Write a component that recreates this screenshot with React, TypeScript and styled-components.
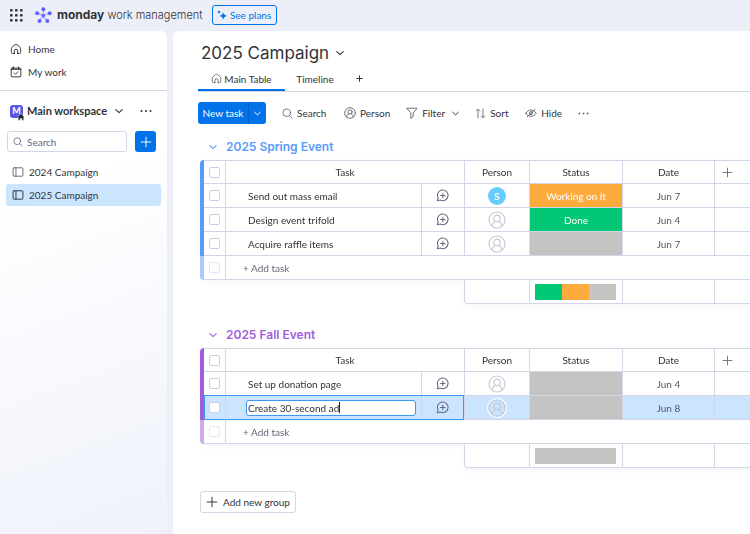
import React from "react";
import styled, { createGlobalStyle, css } from "styled-components";

const text = "#323338";
const muted = "#676879";
const line = "#d3d6e6";
const primary = "#0073ea";
const focus = "#3d97f5";
const selectedBg = "#cce5ff";
const heading = 'Inter, "Liberation Sans", sans-serif';

const GlobalStyle = createGlobalStyle`
  * { box-sizing: border-box; }
  body {
    margin: 0;
    background: #eceff8;
    color: ${text};
    font-family: Lato, "Liberation Sans", sans-serif;
    font-size: 10px;
    line-height: 14px;
  }
  button, input { font: inherit; color: inherit; margin: 0; }
  button { background: none; border: 0; padding: 0; cursor: pointer; }
  h1, h2 { margin: 0; }
  svg { display: block; flex: none; }
`;

/* ---------- icons ---------- */

const Stroke = styled.svg.attrs({
  viewBox: "0 0 20 20",
  "aria-hidden": true,
})<{ $size?: number; $weight?: number }>`
  width: ${(p) => p.$size ?? 12}px;
  height: ${(p) => p.$size ?? 12}px;
  fill: none;
  stroke: currentColor;
  stroke-width: ${(p) => p.$weight ?? 1.6};
  stroke-linecap: round;
  stroke-linejoin: round;
`;

type IconProps = { size?: number; weight?: number };

const HomeIcon = ({ size }: IconProps) => (
  <Stroke $size={size}>
    <path d="M7.2 17.5H4.3a2 2 0 0 1-2-2V8.800c0-.6.3-1.100.7-1.500l5.700-4.700a2 2 0 0 1 2.600 0L17 7.300c.4.4.7.9.7 1.500v6.700a2 2 0 0 1-2 2h-2.900" />
    <path d="M7.200 17.500v-4.300a2.800 2.800 0 0 1 5.600 0v4.300" />
  </Stroke>
);

const CalendarIcon = ({ size }: IconProps) => (
  <Stroke $size={size}>
    <rect x="2" y="3.500" width="16" height="14.500" rx="1.500" />
    <path d="M5.800 1.500v4M14.200 1.500v4M2 5.500h16M6.800 11.500l2.300 2.300 4.300-4.300" />
  </Stroke>
);

const SearchIcon = ({ size }: IconProps) => (
  <Stroke $size={size}>
    <circle cx="8.500" cy="8.500" r="6.800" />
    <path d="M13.500 13.500L18.500 18.500" />
  </Stroke>
);

const PlusIcon = ({ size, weight }: IconProps) => (
  <Stroke $size={size} $weight={weight}>
    <path d="M10 2v16M2 10h16" />
  </Stroke>
);

const ChevronIcon = ({ size = 8 }: IconProps) => (
  <Stroke $size={size} $weight={2.8}>
    <path d="M2 6.500l8 7.500 8-7.500" />
  </Stroke>
);

const BoardIcon = ({ size }: IconProps) => (
  <Stroke $size={size}>
    <rect x="1.800" y="3" width="16.400" height="14" rx="1.500" />
    <path d="M6.600 3v14" />
  </Stroke>
);

const PersonIcon = ({ size, weight }: IconProps) => (
  <Stroke $size={size} $weight={weight}>
    <circle cx="10" cy="10" r="8.900" />
    <circle cx="10" cy="8.200" r="3.600" />
    <path d="M4.300 16.500c.7-2.800 2-4.300 3.800-5.200M15.700 16.500c-.7-2.800-2-4.300-3.800-5.200" />
  </Stroke>
);

const FilterIcon = ({ size }: IconProps) => (
  <Stroke $size={size}>
    <path d="M1.500 2h17l-6.500 8v6l-4 2.600V10z" />
  </Stroke>
);

const SortIcon = ({ size }: IconProps) => (
  <Stroke $size={size}>
    <path d="M5.500 18V2.500M2.300 5.500l3.200-3.200 3.200 3.200M14.500 2v15.500M11.300 14.500l3.200 3.200 3.200-3.200" />
  </Stroke>
);

const HideIcon = ({ size }: IconProps) => (
  <Stroke $size={size}>
    <path d="M1.500 10.500C3.500 6.800 6.400 5 10 5s6.500 1.800 8.500 5.500C16.500 13.700 13.600 15.500 10 15.500s-6.500-1.800-8.500-5z" />
    <circle cx="10" cy="10.200" r="2.600" />
    <path d="M16.500 4L3.500 16.500" />
  </Stroke>
);

const DotsIcon = ({ size }: IconProps) => (
  <Stroke $size={size}>
    <g fill="currentColor" stroke="none">
      <circle cx="2.500" cy="10" r="1.700" />
      <circle cx="10" cy="10" r="1.700" />
      <circle cx="17.500" cy="10" r="1.700" />
    </g>
  </Stroke>
);

const ChatIcon = ({ size }: IconProps) => (
  <Stroke $size={size}>
    <path d="M2 18.200l1.300-4.400a8.200 8.200 0 1 1 3.600 3.300z" />
    <path d="M10.500 6.500v6.800M7.100 9.900h6.800" />
  </Stroke>
);

const GridIcon = () => (
  <svg width="13" height="13" viewBox="0 0 13 13" fill={text} aria-hidden="true">
    {[0, 5, 10].flatMap((y) =>
      [0, 5, 10].map((x) => <rect key={`${x}-${y}`} x={x} y={y} width="2.600" height="2.600" rx="0.700" />)
    )}
  </svg>
);

const LogoIcon = () => (
  <svg width="17" height="17" viewBox="0 0 51 51" aria-hidden="true">
    <g stroke="#b4b5f8" strokeWidth="5" strokeLinecap="round">
      <path d="M25 26V7M25 26L7 19M25 26l18-7M25 26L14 42M25 26l11 16" />
    </g>
    <g fill="#6161ff">
      <circle cx="25" cy="6.500" r="6" />
      <circle cx="6.500" cy="19" r="6" />
      <circle cx="44" cy="19" r="6" />
      <circle cx="13.500" cy="42" r="6" />
      <circle cx="37" cy="42" r="6" />
      <circle cx="25" cy="25.500" r="5" />
    </g>
  </svg>
);

const SparkleIcon = () => (
  <svg width="10" height="10" viewBox="0 0 20 20" fill={primary} aria-hidden="true">
    <path d="M12.500 4.500c.9 3.800 2.700 6 7.500 7.300-4.800 1.300-6.600 3.500-7.500 7.400-.9-3.900-2.700-6.100-7.500-7.400 4.800-1.300 6.600-3.500 7.500-7.300z" />
    <path d="M4 0c.6 2.400 1.600 3.400 4 4-2.400.6-3.400 1.600-4 4-.6-2.400-1.600-3.400-4-4 2.400-.6 3.400-1.600 4-4z" />
  </svg>
);

/* ---------- page shell ---------- */

const Page = styled.div`
  min-height: 100vh;
  display: grid;
  grid-template: 31px 1fr / 167px minmax(0, 1fr);
  column-gap: 6px;
`;

const TopBar = styled.header`
  grid-column: 1 / -1;
  display: flex;
  align-items: center;
  padding: 0 10px 1px;
`;

const Brand = styled.div`
  display: flex;
  align-items: center;
  gap: 5px;
  margin: 0 9px 0 12px;
  font-family: ${heading};
  font-size: 11px;
  font-weight: 300;
  white-space: nowrap;
`;

const BrandName = styled.strong`
  font-size: 12px;
  font-weight: 700;
`;

const PlansButton = styled.button`
  display: flex;
  align-items: center;
  justify-content: center;
  gap: 3px;
  width: 65px;
  height: 20px;
  border: 1px solid ${primary};
  border-radius: 3px;
  color: ${primary};
`;

const Sidebar = styled.aside`
  background: linear-gradient(160deg, #ffffff 30%, #eff2fb 100%);
  border-top-right-radius: 6px;
`;

const NavList = styled.nav`
  display: flex;
  flex-direction: column;
  gap: 9px;
  padding: 11px 10px;
  border-bottom: 1px solid ${line};
`;

const NavLink = styled.a`
  display: flex;
  align-items: center;
  gap: 6px;
  color: inherit;
  text-decoration: none;
`;

const WorkspaceRow = styled.div`
  display: flex;
  align-items: center;
  padding: 13px 15px 13px 10px;
  font-size: 11px;
  font-weight: 700;
`;

const WorkspaceBadge = styled.span`
  position: relative;
  width: 13px;
  height: 13px;
  margin-right: 4px;
  border-radius: 3px;
  background: #5559df;
  color: #fff;
  font-size: 9px;
  line-height: 12px;
  text-align: center;
`;

const BadgeHome = styled.svg`
  position: absolute;
  right: -2px;
  bottom: -3px;
  width: 8px;
  height: 8px;
`;

const WorkspaceToggle = styled.button`
  margin: 0 auto 0 8px;
`;

const SearchRow = styled.div`
  display: flex;
  gap: 8px;
  padding: 0 11px 0 7px;
`;

const SearchBox = styled.label`
  flex: 1;
  min-width: 0;
  display: flex;
  align-items: center;
  gap: 4px;
  height: 21px;
  padding: 0 5px;
  border: 1px solid ${line};
  border-radius: 3px;
  background: #fff;
  color: ${muted};
`;

const SearchField = styled.input`
  flex: 1;
  min-width: 0;
  padding: 0;
  border: 0;
  outline: 0;
  background: none;
  &::placeholder { color: ${muted}; opacity: 1; }
`;

const AddButton = styled.button`
  display: grid;
  place-items: center;
  width: 21px;
  height: 21px;
  border-radius: 3px;
  background: ${primary};
  color: #fff;
`;

const BoardList = styled.nav`
  display: grid;
  gap: 1px;
  padding: 9px 6px;
`;

const BoardLink = styled.a<{ $active?: boolean }>`
  display: flex;
  align-items: center;
  gap: 5px;
  height: 22px;
  padding-left: 6px;
  border-radius: 3px;
  background: ${(p) => (p.$active ? selectedBg : "transparent")};
  color: ${text};
  text-decoration: none;
  svg { color: ${(p) => (p.$active ? text : muted)}; }
`;

const Main = styled.main`
  background: #fff;
  border-top-left-radius: 6px;
  padding: 12px 0 21px 25px;
  overflow-x: auto;
`;

const TitleRow = styled.div`
  display: flex;
  align-items: center;
  gap: 7px;
  padding-left: 3px;
`;

const Title = styled.h1`
  font-family: ${heading};
  font-size: 17px;
  font-weight: 400;
  line-height: 20px;
`;

const Tabs = styled.div`
  display: flex;
  height: 24px;
  margin-top: 5px;
  border-bottom: 1px solid ${line};
`;

const Tab = styled.button<{ $active?: boolean }>`
  display: flex;
  align-items: center;
  justify-content: center;
  gap: 2px;
  width: ${(p) => (p.$active ? 87 : 60)}px;
  border-bottom: 2px solid ${(p) => (p.$active ? primary : "transparent")};
  svg { color: ${muted}; }
`;

const AddTab = styled(Tab)`
  width: 28px;
  svg { color: ${text}; }
`;

const Toolbar = styled.div`
  display: flex;
  align-items: center;
  gap: 16px;
  margin-top: 10px;
`;

const NewTask = styled.div`
  display: flex;
  height: 22px;
  border-radius: 3px;
  overflow: hidden;
  background: ${primary};
  color: #fff;
`;

const NewTaskButton = styled.button`
  width: 50px;
`;

const NewTaskMenu = styled.button`
  display: grid;
  place-items: center;
  width: 18px;
  border-left: 1px solid #0060c2;
`;

const Tool = styled.button<{ $width: number }>`
  display: flex;
  align-items: center;
  gap: 4px;
  min-width: ${(p) => p.$width}px;
  svg { color: ${muted}; }
`;

const ToolMenu = styled.span`
  margin-left: auto;
  svg { color: ${text}; }
`;

/* ---------- groups ---------- */

const Groups = styled.div`
  margin-top: 14px;
`;

const Group = styled.section`
  margin: 0 0 22px 2px;
`;

const GroupTitle = styled.h2<{ $color: string }>`
  display: flex;
  align-items: center;
  gap: 9px;
  margin-bottom: 4px;
  padding-left: 9px;
  color: ${(p) => p.$color};
  font-family: ${heading};
  font-size: 12px;
  font-weight: 600;
  line-height: 18px;
`;

const Table = styled.table`
  width: 100%;
  min-width: 540px;
  table-layout: fixed;
  border-collapse: separate;
  border-spacing: 0;
  filter: drop-shadow(0 2px 2px rgba(60, 70, 110, 0.05));
`;

const Col = styled.col<{ $width?: number }>`
  width: ${(p) => (p.$width ? `${p.$width}px` : "auto")};
`;

const cell = css`
  height: 24px;
  padding: 0;
  border-bottom: 1px solid ${line};
  border-left: 1px solid ${line};
  background: #fff;
  font-weight: 400;
  line-height: 14px;
  text-align: center;
`;

const HeadCell = styled.th`
  ${cell}
  border-top: 1px solid ${line};
`;

const HeadCheck = styled(HeadCell)`
  border-left: 0;
`;

const AddColumnCell = styled(HeadCell)`
  padding-left: 7px;
`;

const Edge = styled.td<{ $color: string; $place?: "top" | "bottom" }>`
  padding: 0;
  background: ${(p) => p.$color};
  opacity: ${(p) => (p.$place === "bottom" ? 0.5 : 1)};
  border-radius: ${(p) => (p.$place === "top" ? "4px 0 0 0" : p.$place === "bottom" ? "0 0 0 4px" : "0")};
`;

const Cell = styled.td<{ $selected?: boolean }>`
  ${cell}
  ${(p) => p.$selected && css`background: ${selectedBg};`}
`;

const outlined = css<{ $selected?: boolean }>`
  ${(p) =>
    p.$selected &&
    css`
      border-bottom-color: ${focus};
      box-shadow: 0 -1px 0 ${focus};
    `}
`;

const CheckCell = styled(Cell)`
  border-left: 0;
  ${outlined}
  ${(p) => p.$selected && css`box-shadow: 0 -1px 0 ${focus}, inset 1px 0 0 ${focus};`}
`;

const Check = styled.input.attrs({ type: "checkbox" })`
  appearance: none;
  display: block;
  width: 11px;
  height: 11px;
  margin: 0 auto;
  border: 1px solid #cdd0df;
  border-radius: 2px;
  background: #fff;
  &:disabled { opacity: 0.5; }
`;

const NameCell = styled(Cell)`
  padding-left: 22px;
  text-align: left;
`;

const EditCell = styled(Cell)`
  padding: 0 5px 0 20px;
  ${outlined}
`;

const EditBox = styled.div`
  display: flex;
  align-items: center;
  height: 16px;
  padding: 0 1px;
  border: 1px solid ${focus};
  border-radius: 3px;
  background: #fff;
`;

const EditField = styled.input`
  field-sizing: content;
  max-width: 100%;
  padding: 0;
  border: 0;
  outline: 0;
  background: none;
  caret-color: transparent;
`;

const Caret = styled.span`
  width: 1px;
  height: 11px;
  background: #1f2025;
`;

const ChatCell = styled(Cell)`
  padding-right: 2px;
  ${outlined}
  ${(p) => p.$selected && css`box-shadow: 0 -1px 0 ${focus}, inset -1px 0 0 ${focus};`}
`;

const IconButton = styled.button`
  display: block;
  margin: 0 auto;
  color: ${muted};
`;

const AddColumn = styled(IconButton)`
  margin: 0;
`;

const Avatar = styled.span<{ $filled?: boolean; $ring?: boolean }>`
  display: grid;
  place-items: center;
  width: 18px;
  height: 18px;
  margin: 0 auto;
  border-radius: 50%;
  background: ${(p) => (p.$filled ? "#66ccff" : "transparent")};
  color: ${(p) => (p.$filled ? "#fff" : "#c5c7d3")};
  box-shadow: ${(p) => (p.$ring ? "0 0 0 1px #fff" : "none")};
  font-weight: 700;
`;

const StatusCell = styled(Cell)<{ $fill: string }>`
  background: ${(p) => p.$fill};
  color: #fff;
`;

const DateCell = styled(Cell)`
  color: #55565f;
`;

const AddCell = styled(Cell)`
  padding-left: 17px;
  color: ${muted};
  text-align: left;
`;

const Blank = styled.td`
  padding: 0;
`;

const SummaryCell = styled(Cell)<{ $first?: boolean }>`
  padding: 0 6px 0 5px;
  border-bottom-left-radius: ${(p) => (p.$first ? 4 : 0)}px;
`;

const Battery = styled.div`
  display: flex;
  height: 16px;
`;

const Segment = styled.span<{ $fill: string }>`
  flex: 1;
  background: ${(p) => p.$fill};
`;

const AddGroup = styled.button`
  display: flex;
  align-items: center;
  gap: 5px;
  height: 22px;
  margin: 23px 0 0 2px;
  padding: 0 5px;
  border: 1px solid ${line};
  border-radius: 3px;
`;

/* ---------- data ---------- */

type Status = "working" | "done" | "empty";
type Task = { name: string; person?: string; status: Status; date: string; editing?: boolean };
type GroupData = { title: string; color: string; tasks: Task[]; summary: Status[] };

const statuses: Record<Status, { label: string; fill: string }> = {
  working: { label: "Working on it", fill: "#fdab3d" },
  done: { label: "Done", fill: "#00c875" },
  empty: { label: "", fill: "#c4c4c4" },
};

const groups: GroupData[] = [
  {
    title: "2025 Spring Event",
    color: "#579bfc",
    tasks: [
      { name: "Send out mass email", person: "S", status: "working", date: "Jun 7" },
      { name: "Design event trifold", status: "done", date: "Jun 4" },
      { name: "Acquire raffle items", status: "empty", date: "Jun 7" },
    ],
    summary: ["done", "working", "empty"],
  },
  {
    title: "2025 Fall Event",
    color: "#a25ddc",
    tasks: [
      { name: "Set up donation page", status: "empty", date: "Jun 4" },
      { name: "Create 30-second ad", status: "empty", date: "Jun 8", editing: true },
    ],
    summary: ["empty"],
  },
];

const columns = [4, 21, 196, 43, 65, 93, 92, undefined];

function TaskRow({ task, color }: { task: Task; color: string }) {
  const status = statuses[task.status];
  const selected = task.editing;
  return (
    <tr>
      <Edge $color={color} />
      <CheckCell $selected={selected}><Check aria-label={`Select ${task.name}`} /></CheckCell>
      {selected ? (
        <EditCell $selected>
          <EditBox>
            <EditField defaultValue={task.name} aria-label="Task name" />
            <Caret />
          </EditBox>
        </EditCell>
      ) : (
        <NameCell>{task.name}</NameCell>
      )}
      <ChatCell $selected={selected}>
        <IconButton aria-label="Start conversation"><ChatIcon size={13} /></IconButton>
      </ChatCell>
      <Cell $selected={selected}>
        <Avatar $filled={!!task.person} $ring={selected}>
          {task.person ?? <PersonIcon size={18} weight={1.2} />}
        </Avatar>
      </Cell>
      <StatusCell $fill={status.fill}>{status.label}</StatusCell>
      <DateCell $selected={selected}>{task.date}</DateCell>
      <Cell $selected={selected} />
    </tr>
  );
}

function TaskGroup({ title, color, tasks, summary }: GroupData) {
  return (
    <Group>
      <GroupTitle $color={color}><ChevronIcon />{title}</GroupTitle>
      <Table>
        <colgroup>
          {columns.map((width, i) => <Col key={i} $width={width} />)}
        </colgroup>
        <thead>
          <tr>
            <Edge $color={color} $place="top" />
            <HeadCheck><Check aria-label={`Select all in ${title}`} /></HeadCheck>
            <HeadCell colSpan={2}>Task</HeadCell>
            <HeadCell>Person</HeadCell>
            <HeadCell>Status</HeadCell>
            <HeadCell>Date</HeadCell>
            <AddColumnCell>
              <AddColumn aria-label="Add column"><PlusIcon size={11} /></AddColumn>
            </AddColumnCell>
          </tr>
        </thead>
        <tbody>
          {tasks.map((task) => <TaskRow key={task.name} task={task} color={color} />)}
          <tr>
            <Edge $color={color} $place="bottom" />
            <CheckCell><Check disabled aria-label="Select new task" /></CheckCell>
            <AddCell colSpan={6}><button>+ Add task</button></AddCell>
          </tr>
        </tbody>
        <tfoot>
          <tr>
            <Blank colSpan={4} />
            <SummaryCell $first />
            <SummaryCell>
              <Battery>
                {summary.map((s) => <Segment key={s} $fill={statuses[s].fill} />)}
              </Battery>
            </SummaryCell>
            <SummaryCell />
            <SummaryCell />
          </tr>
        </tfoot>
      </Table>
    </Group>
  );
}

export default function App() {
  return (
    <>
      <GlobalStyle />
      <Page>
        <TopBar>
          <button aria-label="Products"><GridIcon /></button>
          <Brand>
            <LogoIcon />
            <span><BrandName>monday</BrandName> work management</span>
          </Brand>
          <PlansButton><SparkleIcon />See plans</PlansButton>
        </TopBar>

        <Sidebar>
          <NavList>
            <NavLink href="#home"><HomeIcon />Home</NavLink>
            <NavLink href="#my-work"><CalendarIcon />My work</NavLink>
          </NavList>
          <WorkspaceRow>
            <WorkspaceBadge>
              M
              <BadgeHome viewBox="0 0 8 8" aria-hidden="true">
                <path d="M4 .8L1.200 3.200v4h2V5.400h1.600v1.800h2v-4z" fill="#1f2025" stroke="#fff" strokeWidth="0.500" />
              </BadgeHome>
            </WorkspaceBadge>
            Main workspace
            <WorkspaceToggle aria-label="Switch workspace"><ChevronIcon /></WorkspaceToggle>
            <button aria-label="Workspace options"><DotsIcon /></button>
          </WorkspaceRow>
          <SearchRow>
            <SearchBox>
              <SearchIcon size={10} />
              <SearchField placeholder="Search" aria-label="Search" />
            </SearchBox>
            <AddButton aria-label="Add to workspace"><PlusIcon size={12} /></AddButton>
          </SearchRow>
          <BoardList>
            <BoardLink href="#2024"><BoardIcon />2024 Campaign</BoardLink>
            <BoardLink href="#2025" $active><BoardIcon />2025 Campaign</BoardLink>
          </BoardList>
        </Sidebar>

        <Main>
          <TitleRow>
            <Title>2025 Campaign</Title>
            <button aria-label="Board menu"><ChevronIcon /></button>
          </TitleRow>
          <Tabs>
            <Tab $active><HomeIcon size={11} />Main Table</Tab>
            <Tab>Timeline</Tab>
            <AddTab aria-label="Add view"><PlusIcon size={7} weight={3} /></AddTab>
          </Tabs>
          <Toolbar>
            <NewTask>
              <NewTaskButton>New task</NewTaskButton>
              <NewTaskMenu aria-label="More ways to add"><ChevronIcon size={7} /></NewTaskMenu>
            </NewTask>
            <Tool $width={46}><SearchIcon size={11} />Search</Tool>
            <Tool $width={45}><PersonIcon size={12} />Person</Tool>
            <Tool $width={53}><FilterIcon size={12} />Filter<ToolMenu><ChevronIcon size={7} /></ToolMenu></Tool>
            <Tool $width={34}><SortIcon size={11} />Sort</Tool>
            <Tool $width={36}><HideIcon size={12} />Hide</Tool>
            <Tool $width={12} aria-label="More options"><DotsIcon size={11} /></Tool>
          </Toolbar>
          <Groups>
            {groups.map((group) => <TaskGroup key={group.title} {...group} />)}
          </Groups>
          <AddGroup><PlusIcon size={12} />Add new group</AddGroup>
        </Main>
      </Page>
    </>
  );
}
